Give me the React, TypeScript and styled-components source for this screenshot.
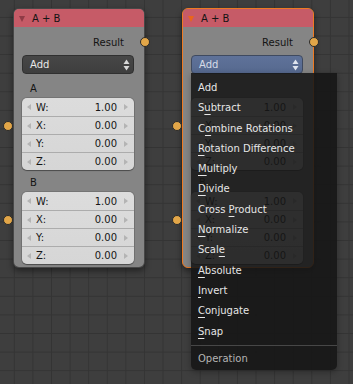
import React from "react";
import styled, { createGlobalStyle } from "styled-components";

const GlobalStyle = createGlobalStyle`
  html, body {
    margin: 0;
    padding: 0;
    background: #3e3e3e;
  }
  * {
    box-sizing: border-box;
  }
`;

// ---------------------------------------------------------------- canvas

const Canvas = styled.div`
  position: relative;
  width: 353px;
  height: 384px;
  overflow: hidden;
  font-family: "DejaVu Sans", "Liberation Sans", sans-serif;
  font-size: 10px;
  background-color: #3e3e3e;
  background-image: linear-gradient(to right, #343434 1px, transparent 1px),
    linear-gradient(to bottom, #343434 1px, transparent 1px);
  background-size: 18.6px 18.6px;
  background-position: 13.8px 16.9px;
`;

// ---------------------------------------------------------------- node

const NodeFrame = styled.div<{ $x: number; $y: number; $selected?: boolean }>`
  position: absolute;
  left: ${(p) => p.$x}px;
  top: ${(p) => p.$y}px;
  width: 132px;
  border-radius: 6px;
  background: #858585;
  border: 1px solid ${(p) => (p.$selected ? "#ee7a22" : "rgba(20,20,20,0.55)")};
  box-shadow: 0 3px 6px rgba(0, 0, 0, 0.45);
`;

const Header = styled.div`
  height: 18px;
  display: flex;
  align-items: center;
  padding-left: 5px;
  background: #c65b67;
  border-radius: 5px 5px 0 0;
`;

const Collapse = styled.span<{ $selected?: boolean }>`
  width: 0;
  height: 0;
  border-left: 3.5px solid transparent;
  border-right: 3.5px solid transparent;
  border-top: 6px solid ${(p) => (p.$selected ? "#ea661a" : "#8f3b46")};
  margin-top: 1px;
`;

const Title = styled.span`
  margin-left: 7px;
  color: #141414;
`;

const Body = styled.div`
  padding: 6px 10px 3px 8px;
  display: flex;
  flex-direction: column;
`;

const OutputRow = styled.div`
  position: relative;
  height: 18px;
  display: flex;
  align-items: center;
  justify-content: flex-end;
  padding-right: 10px;
  color: #141414;
`;

const Socket = styled.span<{ $side: "left" | "right" }>`
  position: absolute;
  top: 50%;
  ${(p) => (p.$side === "left" ? "left: -19px;" : "right: -16px;")}
  width: 10px;
  height: 10px;
  margin-top: -5px;
  border-radius: 50%;
  background: #e2a648;
  border: 1px solid #2a2a2a;
`;

const Dropdown = styled.div<{ $active?: boolean }>`
  position: relative;
  margin-top: 4px;
  height: 19px;
  display: flex;
  align-items: center;
  padding-left: 7px;
  border-radius: 4px;
  background: ${(p) =>
    p.$active
      ? "linear-gradient(#5f7299, #56698f)"
      : "linear-gradient(#474747, #3e3e3e)"};
  border: 1px solid ${(p) => (p.$active ? "#3f4a60" : "#303030")};
  color: ${(p) => (p.$active ? "#d6dce8" : "#e8e8e8")};
`;

const UpDown = styled.svg`
  position: absolute;
  right: 3px;
  top: 3px;
`;

const GroupLabel = styled.div<{ $top: number }>`
  height: 18px;
  margin-top: ${(p) => p.$top}px;
  margin-bottom: 1px;
  padding-left: 8px;
  display: flex;
  align-items: center;
  color: #141414;
`;

const VectorBox = styled.div`
  display: flex;
  flex-direction: column;
  border-radius: 5px;
  background: linear-gradient(#dcdcdc, #d6d6d6);
  box-shadow: 0 0 0 1px rgba(0, 0, 0, 0.12), 0 1px 1px rgba(0, 0, 0, 0.35);
`;

const FieldRow = styled.div`
  position: relative;
  height: 18px;
  display: flex;
  align-items: center;
  padding: 0 6px 0 5px;
  color: #161616;
  & + & {
    border-top: 1px solid #acacac;
  }
`;

const Nudge = styled.span<{ $dir: "left" | "right" }>`
  width: 0;
  height: 0;
  border-top: 3px solid transparent;
  border-bottom: 3px solid transparent;
  ${(p) =>
    p.$dir === "left"
      ? "border-right: 4px solid #b4b4b4;"
      : "border-left: 4px solid #b4b4b4;"}
`;

const FieldName = styled.span`
  margin-left: 5px;
  flex: 1;
`;

const FieldValue = styled.span`
  margin-right: 7px;
`;

// ---------------------------------------------------------------- menu

const Menu = styled.div`
  position: absolute;
  left: 191px;
  top: 73px;
  width: 146px;
  padding: 5px 0 1px;
  background: rgba(22, 22, 22, 0.88);
  border-radius: 0 0 5px 5px;
  box-shadow: 0 2px 6px rgba(0, 0, 0, 0.3);
`;

const MenuItem = styled.div<{ $title?: boolean }>`
  height: ${(p) => (p.$title ? 20 : 20.3)}px;
  line-height: ${(p) => (p.$title ? 20 : 20.3)}px;
  padding-left: 7px;
  color: ${(p) => (p.$title ? "#b4b4b4" : "#e6e6e6")};
  white-space: nowrap;
`;

const Key = styled.span`
  text-decoration: underline;
  text-underline-offset: 3px;
  text-decoration-thickness: 1px;
`;

const Separator = styled.div`
  height: 1px;
  margin: 3px 0;
  background: #474747;
`;

const operations: [string, number][] = [
  ["Add", -1],
  ["Subtract", 1],
  ["Combine Rotations", 1],
  ["Rotation Difference", 0],
  ["Multiply", 0],
  ["Divide", 0],
  ["Cross Product", 6],
  ["Normalize", 0],
  ["Scale", 4],
  ["Absolute", 0],
  ["Invert", 0],
  ["Conjugate", 0],
  ["Snap", 0],
];

const Vector = ({ values }: { values: string[] }) => (
  <VectorBox>
    {["W:", "X:", "Y:", "Z:"].map((n, i) => (
      <FieldRow key={n}>
        {i === 1 && <Socket $side="left" />}
        <Nudge $dir="left" />
        <FieldName>{n}</FieldName>
        <FieldValue>{values[i]}</FieldValue>
        <Nudge $dir="right" />
      </FieldRow>
    ))}
  </VectorBox>
);

const MathNode = ({ x, selected }: { x: number; selected?: boolean }) => (
  <NodeFrame $x={x} $y={8} $selected={selected}>
    <Header>
      <Collapse $selected={selected} />
      <Title>A + B</Title>
    </Header>
    <Body>
      <OutputRow>
        Result
        <Socket $side="right" />
      </OutputRow>
      <Dropdown $active={selected}>
        Add
        <UpDown width="7" height="12" viewBox="0 0 7 12">
          <path d="M3.5 0.5 L6.5 5 L0.5 5 Z" fill={selected ? "#dfe4ee" : "#d8d8d8"} />
          <path d="M0.5 7 L6.5 7 L3.5 11.5 Z" fill={selected ? "#dfe4ee" : "#d8d8d8"} />
        </UpDown>
      </Dropdown>
      <GroupLabel $top={5}>A</GroupLabel>
      <Vector values={["1.00", "0.00", "0.00", "0.00"]} />
      <GroupLabel $top={3}>B</GroupLabel>
      <Vector values={["1.00", "0.00", "0.00", "0.00"]} />
    </Body>
  </NodeFrame>
);

export default function App() {
  return (
    <Canvas>
      <GlobalStyle />
      <MathNode x={13} />
      <MathNode x={182} selected />
      <Menu>
        {operations.map(([label, k]) => (
          <MenuItem key={label}>
            {k < 0 ? (
              label
            ) : (
              <>
                {label.slice(0, k)}
                <Key>{label[k]}</Key>
                {label.slice(k + 1)}
              </>
            )}
          </MenuItem>
        ))}
        <Separator />
        <MenuItem $title>Operation</MenuItem>
      </Menu>
    </Canvas>
  );
}
